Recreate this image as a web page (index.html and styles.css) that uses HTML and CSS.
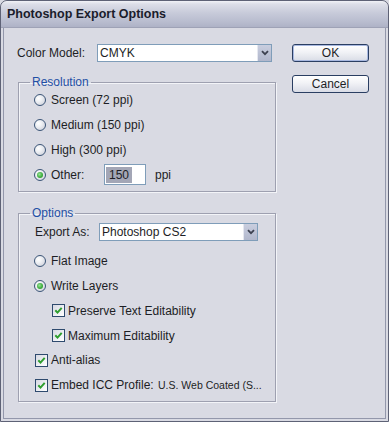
FILE: index.html
```html
<!DOCTYPE html>
<html>
<head>
<meta charset="utf-8">
<link rel="stylesheet" href="styles.css">
</head>
<body>
<div class="window">
  <div class="titlebar"><span class="title">Photoshop Export Options</span></div>
  <div class="client">
    <div class="main">
      <div class="field-row">
        <span class="lbl lbl-color">Color Model:</span>
        <div class="select select-color">
          <span class="select-value">CMYK</span>
          <span class="select-btn"><svg width="8" height="6" viewBox="0 0 8 6"><path d="M1 1.2 L4 4.2 L7 1.2" fill="none" stroke="#3d4150" stroke-width="1.8"/></svg></span>
        </div>
      </div>

      <fieldset class="group group-res">
        <legend>Resolution</legend>
        <div class="opt"><span class="radio"></span>Screen (72 ppi)</div>
        <div class="opt"><span class="radio"></span>Medium (150 ppi)</div>
        <div class="opt"><span class="radio"></span>High (300 ppi)</div>
        <div class="opt"><span class="radio on"></span><span class="other-lbl">Other:</span><span class="input"><span class="sel">150</span></span><span class="unit">ppi</span></div>
      </fieldset>

      <fieldset class="group group-opt">
        <legend>Options</legend>
        <div class="field-row export-row">
          <span class="lbl lbl-export">Export As:</span>
          <div class="select select-export">
            <span class="select-value">Photoshop CS2</span>
            <span class="select-btn"><svg width="8" height="6" viewBox="0 0 8 6"><path d="M1 1.2 L4 4.2 L7 1.2" fill="none" stroke="#3d4150" stroke-width="1.8"/></svg></span>
          </div>
        </div>
        <div class="opt first-opt"><span class="radio"></span>Flat Image</div>
        <div class="opt"><span class="radio on"></span>Write Layers</div>
        <div class="opt indent"><span class="check"><svg width="9" height="9" viewBox="0 0 9 9"><path d="M1.3 4.3 L3.5 6.6 L7.7 1.9" fill="none" stroke="#2f9e2f" stroke-width="2"/></svg></span>Preserve Text Editability</div>
        <div class="opt indent"><span class="check"><svg width="9" height="9" viewBox="0 0 9 9"><path d="M1.3 4.3 L3.5 6.6 L7.7 1.9" fill="none" stroke="#2f9e2f" stroke-width="2"/></svg></span>Maximum Editability</div>
        <div class="opt chk"><span class="check"><svg width="9" height="9" viewBox="0 0 9 9"><path d="M1.3 4.3 L3.5 6.6 L7.7 1.9" fill="none" stroke="#2f9e2f" stroke-width="2"/></svg></span>Anti-alias</div>
        <div class="opt chk"><span class="check"><svg width="9" height="9" viewBox="0 0 9 9"><path d="M1.3 4.3 L3.5 6.6 L7.7 1.9" fill="none" stroke="#2f9e2f" stroke-width="2"/></svg></span><span class="embed-lbl">Embed ICC Profile:</span><span class="profile">U.S. Web Coated (S...</span></div>
      </fieldset>
    </div>
    <div class="buttons">
      <button class="btn btn-default">OK</button>
      <button class="btn">Cancel</button>
    </div>
  </div>
</div>
</body>
</html>
```

FILE: styles.css
```css
* { box-sizing: border-box; }

body {
  margin: 0;
  background: #d9dae3;
  font-family: "Liberation Sans", Arial, sans-serif;
  font-size: 12px;
  color: #1d1e25;
}

.window {
  width: 389px;
  height: 422px;
  border: 1px solid #5e6276;
  border-radius: 7px 7px 0 0;
  padding: 0 2px 2px;
  background: #d9dae3;
  display: flex;
  flex-direction: column;
  overflow: hidden;
}

.titlebar {
  flex: none;
  height: 27px;
  margin: 0 -2px;
  padding-left: 6px;
  display: flex;
  align-items: center;
  border-radius: 6px 6px 0 0;
  background: linear-gradient(#f1f2f7 0, #dcdee8 12%, #c8cbda 45%, #b6bacd 85%, #aeb2c6 100%);
  border-bottom: 1px solid #9ea2b6;
}

.title {
  font-weight: bold;
  font-size: 12.5px;
  color: #1a1c2b;
  white-space: nowrap;
}

.client {
  flex: 1;
  display: flex;
  gap: 17px;
  padding: 16px 15px 0 13px;
  border: 1px solid #9397ab;
  border-top: none;
}

.main {
  width: 258px;
  flex: none;
}

.field-row {
  display: flex;
  align-items: center;
  height: 18px;
  white-space: nowrap;
}

.lbl-color { width: 80px; }

.select {
  display: flex;
  height: 18px;
  border: 1px solid #7f9db9;
  background: #fff;
}

.select-color { width: 175px; }

.select-value {
  flex: 1;
  padding-left: 2px;
  line-height: 16px;
}

.select-btn {
  width: 14px;
  display: flex;
  align-items: center;
  justify-content: center;
  background: linear-gradient(#c9cedf, #b1b7cc);
  border-left: 1px solid #e6e8f0;
}

.group {
  margin: 14px 0 0 1px;
  padding: 0 0 4px 11px;
  width: 258px;
  min-width: 0;
  border: 1px solid #9ea0b0;
  box-shadow: 1px 1px 0 #f3f4f8, inset 1px 1px 0 #f3f4f8;
}

.group legend {
  padding: 0 2px;
  line-height: 12px;
  color: #1f4fa5;
}

.group-opt {
  margin-top: 15px;
  padding-bottom: 3.5px;
}

.opt {
  display: flex;
  align-items: center;
  height: 24.75px;
  padding-left: 4px;
  white-space: nowrap;
}

.radio {
  width: 12px;
  height: 12px;
  flex: none;
  border-radius: 50%;
  border: 1px solid #3b5577;
  background: radial-gradient(circle at 35% 35%, #ffffff 0, #eef0f4 35%, #c6c9d5 100%);
  margin-right: 5px;
  display: flex;
  align-items: center;
  justify-content: center;
}

.radio.on::after {
  content: "";
  width: 6px;
  height: 6px;
  border-radius: 50%;
  background: radial-gradient(circle at 40% 40%, #9be39b 0, #3fae3f 55%, #238f23 100%);
}

.other-lbl { width: 53px; }

.input {
  width: 42px;
  height: 21px;
  display: flex;
  align-items: center;
  padding: 1px;
  border: 1px solid #7f9db9;
  background: #fff;
}

.input .sel {
  background: #a3a6b6;
  padding: 1px 3px;
  line-height: 14px;
  color: #1d1e25;
}

.unit { margin-left: 9px; }

.export-row {
  height: 26px;
  margin-bottom: 4px;
  padding-left: 5px;
}

.lbl-export { width: 64px; }

.select-export { width: 159px; }

.check {
  width: 13px;
  height: 13px;
  flex: none;
  border: 1px solid #2e4a6e;
  background: linear-gradient(135deg, #d6d8e2 0, #f4f5f8 70%, #ffffff 100%);
  display: flex;
  align-items: center;
  justify-content: center;
  margin-right: 3px;
}

.indent { padding-left: 22px; }
.chk { padding-left: 5px; }

.embed-lbl { width: 107px; }

.profile {
  font-size: 10.5px;
}

.buttons {
  display: flex;
  flex-direction: column;
  gap: 13px;
  width: 77px;
}

.btn {
  width: 77px;
  height: 18px;
  padding: 0;
  border: 1px solid #2a3e62;
  border-radius: 3px;
  background: linear-gradient(#ffffff 0, #f1f2f6 45%, #d9dce6 100%);
  font-family: "Liberation Sans", Arial, sans-serif;
  font-size: 12px;
  color: #1d1e25;
}

.btn-default {
  box-shadow: inset 0 0 0 1px #a8b8e0;
}
```
